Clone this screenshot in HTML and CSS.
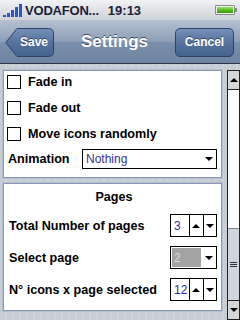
FILE: index.html
```html
<!DOCTYPE html>
<html>
<head>
<meta charset="utf-8">
<link rel="stylesheet" href="styles.css">
</head>
<body>
<div class="screen">
  <div class="status">
    <svg class="signal" width="20" height="13" viewBox="0 0 20 13">
      <rect x="0" y="11" width="3" height="2" fill="#2a56c8"/>
      <rect x="4" y="9" width="3" height="4" fill="#2a56c8"/>
      <rect x="8" y="6" width="3" height="7" fill="#2a56c8"/>
      <rect x="12" y="3" width="3" height="10" fill="#2a56c8"/>
      <rect x="16" y="0" width="3" height="13" fill="#2a56c8"/>
    </svg>
    <span class="carrier">VODAFON...</span>
    <span class="time">19:13</span>
    <span class="battery"><span class="battery-fill"></span></span>
  </div>
  <div class="nav">
    <div class="btn-back">
      <svg class="btn-back-shape" width="49" height="29" viewBox="0 0 49 29">
        <defs>
          <linearGradient id="bg" x1="0" y1="0" x2="0" y2="1">
            <stop offset="0" stop-color="#7590b8"/>
            <stop offset="0.5" stop-color="#56739f"/>
            <stop offset="1" stop-color="#44638f"/>
          </linearGradient>
        </defs>
        <path d="M0.8 14.5 L12 0.5 H43.5 Q48.5 0.5 48.5 5.5 V23.5 Q48.5 28.5 43.5 28.5 H12 Z" fill="url(#bg)" stroke="#2c4369" stroke-width="1"/>
      </svg>
      <span class="btn-text">Save</span>
    </div>
    <div class="title">Settings</div>
    <div class="btn">Cancel</div>
  </div>
  <div class="main">
    <div class="content">
      <div class="panel panel-effects">
        <div class="check"><span class="box"></span><span>Fade in</span></div>
        <div class="check"><span class="box"></span><span>Fade out</span></div>
        <div class="check"><span class="box"></span><span>Move icons randomly</span></div>
        <div class="field">
          <span class="label">Animation</span>
          <div class="select">
            <span class="select-val">Nothing</span>
            <span class="arrow-cell"><i class="tri-down"></i></span>
          </div>
        </div>
      </div>
      <div class="panel panel-pages">
        <div class="heading">Pages</div>
        <div class="row">
          <span class="label">Total Number of pages</span>
          <div class="spin">
            <span class="spin-val">3</span>
            <span class="spin-btn"><i class="tri-up"></i></span>
            <span class="spin-btn"><i class="tri-down"></i></span>
          </div>
        </div>
        <div class="row">
          <span class="label">Select page</span>
          <div class="combo">
            <span class="combo-val">2</span>
            <span class="arrow-cell"><i class="tri-down"></i></span>
          </div>
        </div>
        <div class="row">
          <span class="label">N° icons x page selected</span>
          <div class="spin">
            <span class="spin-val">12</span>
            <span class="spin-btn"><i class="tri-up"></i></span>
            <span class="spin-btn"><i class="tri-down"></i></span>
          </div>
        </div>
      </div>
    </div>
    <div class="scrollbar">
      <div class="sb-btn"><i class="tri-up"></i></div>
      <div class="sb-track"></div>
      <div class="sb-thumb"><span class="grip"></span></div>
      <div class="sb-btn"><i class="tri-down"></i></div>
    </div>
  </div>
</div>
</body>
</html>
```

FILE: styles.css
```css
* { box-sizing: border-box; }
html, body { margin: 0; padding: 0; }
body {
  width: 240px;
  height: 320px;
  overflow: hidden;
  font-family: "Liberation Sans", Arial, sans-serif;
}
.screen {
  width: 240px;
  height: 320px;
  display: flex;
  flex-direction: column;
  background: repeating-linear-gradient(90deg, #c6cdd5 0 5px, #ccd3da 5px 7px);
}
.status {
  height: 20px;
  display: flex;
  align-items: center;
  padding: 0 3px 0 3px;
  background: linear-gradient(#f2f3f5, #dfe1e5 50%, #cfd2d7);
}
.signal { margin-top: 1px; }
.carrier {
  margin-left: 2px;
  font-weight: bold;
  font-size: 13px;
  color: #1a1f3a;
  letter-spacing: -0.2px;
}
.time {
  margin-left: 9px;
  font-weight: bold;
  font-size: 13px;
  color: #1a1f3a;
}
.battery {
  margin-left: auto;
  width: 20px;
  height: 10px;
  border: 1px solid #8c8c8c;
  border-radius: 1px;
  padding: 1px;
  position: relative;
  margin-right: 2px;
  background: #eee;
}
.battery::after {
  content: "";
  position: absolute;
  right: -3px;
  top: 2px;
  width: 2px;
  height: 4px;
  background: #8c8c8c;
}
.battery-fill {
  display: block;
  height: 100%;
  background: linear-gradient(#9be36a, #4cb81c 60%, #3a9a12);
}
.nav {
  height: 44px;
  display: flex;
  align-items: center;
  justify-content: space-between;
  padding: 0 6px 0 5px;
  background: linear-gradient(#b6c1d0, #8d9eb6 50%, #7a8fab 51%, #6d84a2);
  border-bottom: 1px solid #2d3642;
}
.btn-back {
  position: relative;
  width: 49px;
  height: 29px;
  display: flex;
  align-items: center;
  justify-content: center;
  padding-left: 9px;
  margin-top: 1px;
}
.btn-back-shape { position: absolute; left: 0; top: 0; }
.btn-text, .btn {
  position: relative;
  color: #fff;
  font-weight: bold;
  font-size: 12px;
  text-shadow: 0 -1px 0 rgba(0, 0, 0, 0.45);
}
.btn {
  width: 59px;
  height: 29px;
  display: flex;
  align-items: center;
  justify-content: center;
  border: 1px solid #2c4369;
  border-radius: 5px;
  background: linear-gradient(#7590b8, #56739f 50%, #44638f);
  margin-top: 1px;
}
.title {
  color: #fff;
  font-weight: bold;
  font-size: 17px;
  text-shadow: 0 -1px 0 rgba(40, 50, 70, 0.8);
}
.main {
  flex: 1;
  display: flex;
  padding-top: 6px;
  min-height: 0;
}
.content {
  flex: 1;
  display: flex;
  flex-direction: column;
  gap: 5px;
  padding: 0 5px 0 3px;
}
.panel {
  background: #fff;
  border: 1px solid #8a9ab2;
  box-shadow: 0 0 0 1px #b5c0ce;
  color: #000;
  font-size: 12.6px;
  font-weight: bold;
}
.panel-effects {
  display: flex;
  flex-direction: column;
  gap: 12px;
  padding: 4px 4px 8px 3px;
}
.check {
  height: 14px;
  display: flex;
  align-items: center;
  gap: 7px;
}
.box {
  width: 14px;
  height: 14px;
  border: 1px solid #000;
  background: #fff;
}
.field {
  display: flex;
  align-items: center;
  justify-content: space-between;
  margin-top: -4px;
  padding-left: 1px;
}
.select {
  width: 135px;
  height: 20px;
  border: 1px solid #000;
  display: flex;
  align-items: center;
}
.select-val {
  flex: 1;
  padding-left: 3px;
  font-weight: normal;
  font-size: 12px;
  color: #34319a;
}
.arrow-cell {
  width: 15px;
  height: 100%;
  display: flex;
  align-items: center;
  justify-content: center;
}
.tri-down, .tri-up {
  display: block;
  width: 0;
  height: 0;
  border-left: 4px solid transparent;
  border-right: 4px solid transparent;
}
.tri-down { border-top: 4px solid #000; }
.tri-up { border-bottom: 4px solid #000; }
.panel-pages {
  flex: 1;
  margin-bottom: 9px;
  display: flex;
  flex-direction: column;
  gap: 9px;
  padding: 5px 4px 9px 5px;
}
.heading {
  text-align: center;
  line-height: 16px;
  padding-left: 2px;
}
.row {
  height: 23px;
  display: flex;
  align-items: center;
  justify-content: space-between;
}
.spin, .combo {
  width: 47px;
  height: 23px;
  border: 1px solid #000;
  display: flex;
}
.spin-val {
  width: 19px;
  display: flex;
  align-items: center;
  padding-left: 3px;
  font-weight: normal;
  font-size: 12px;
  color: #2d2aa8;
  border-right: 1px solid #000;
}
.spin-btn {
  flex: 1;
  display: flex;
  align-items: center;
  justify-content: center;
}
.spin-btn + .spin-btn { border-left: 1px solid #000; }
.combo-val {
  width: 29px;
  margin: 1px 0 1px 1px;
  background: #a4a4a4;
  color: #dcdcdc;
  font-weight: normal;
  font-size: 12px;
  display: flex;
  align-items: center;
  padding-left: 2px;
}
.combo .arrow-cell { flex: 1; }
.scrollbar {
  width: 13px;
  display: flex;
  flex-direction: column;
  border-left: 1px solid #222;
  border-right: 1px solid #222;
  background: #fff;
}
.sb-btn {
  height: 20px;
  background: #d6d6d6;
  display: flex;
  align-items: center;
  justify-content: center;
  border-top: 1px solid #222;
  border-bottom: 1px solid #222;
}
.sb-track { flex: 1; background: #fff; }
.sb-thumb {
  height: 72px;
  background: #cfd5dc;
  border-top: 1px solid #888;
  display: flex;
  align-items: center;
  justify-content: center;
}
.grip {
  width: 7px;
  height: 5px;
  border-top: 1px solid #333;
  border-bottom: 1px solid #333;
  position: relative;
}
.grip::after {
  content: "";
  position: absolute;
  left: 0;
  right: 0;
  top: 1px;
  border-top: 1px solid #333;
}
```
